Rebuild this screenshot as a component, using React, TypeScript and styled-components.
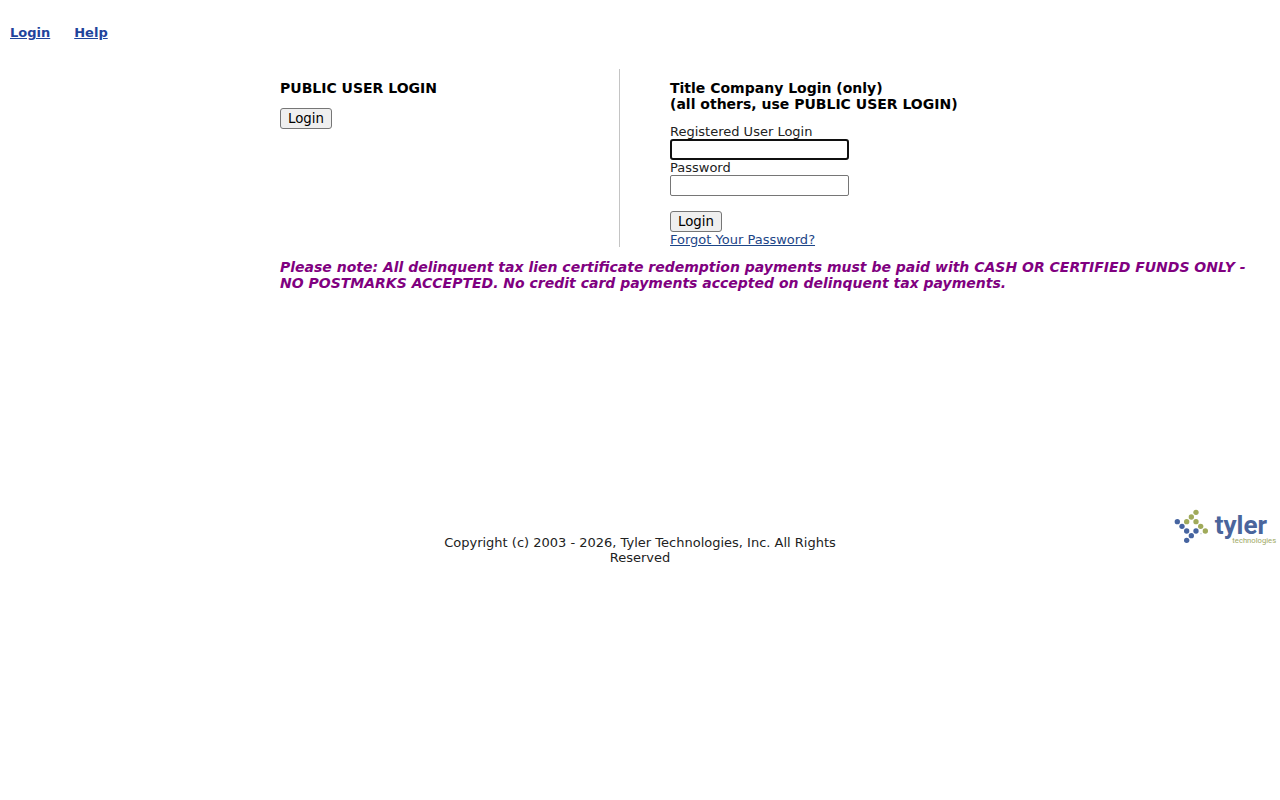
import React from "react";
import styled, { createGlobalStyle } from "styled-components";

const GlobalStyle = createGlobalStyle`
  body {
    margin: 0;
    background: #fff;
    color: #222;
    font: 13px/15px "DejaVu Sans", Verdana, sans-serif;
  }
`;

const Nav = styled.nav`
  display: flex;
  gap: 24px;
  padding: 25px 10px 0;
  height: 44px;
`;

const Link = styled.a<{ $bold?: boolean }>`
  color: ${(p) => (p.$bold ? "#1f449c" : "#1c4587")};
  font-weight: ${(p) => (p.$bold ? "bold" : "normal")};
`;

const Main = styled.main`
  margin-left: 280px;
`;

const Columns = styled.div`
  display: grid;
  grid-template-columns: 34% 66%;
`;

const Column = styled.section<{ $divided?: boolean }>`
  box-sizing: border-box;
  padding: 11px 0 0 ${(p) => (p.$divided ? "50px" : "0")};
  border-right: ${(p) => (p.$divided ? "0" : "1px solid #c4c4c4")};
`;

const Heading = styled.h2`
  margin: 0 0 12px;
  color: #000;
  font-size: 14px;
  line-height: 16px;
`;

const Form = styled.form`
  display: flex;
  flex-direction: column;
  align-items: flex-start;
`;

const Label = styled.label`
  display: block;
  line-height: 15px;
`;

const Field = styled.input`
  box-sizing: border-box;
  width: 179px;
  height: 21px;
  padding: 1px 2px;
  border: 1px solid #767676;
  border-radius: 2px;
  font: inherit;

  &:focus {
    padding: 0 1px;
    border: 2px solid #101010;
    border-radius: 3px;
    outline: none;
  }
`;

const Button = styled.button<{ $spaced?: boolean }>`
  box-sizing: border-box;
  width: 52px;
  height: 21px;
  margin-top: ${(p) => (p.$spaced ? "15px" : "0")};
  padding: 0;
  border: 1px solid #767676;
  border-radius: 3px;
  background: #efefef;
  color: #000;
  font-family: "DejaVu Sans", sans-serif;
`;

const Notice = styled.p`
  margin: 12px 20px 0 0;
  color: purple;
  font-size: 14px;
  font-style: italic;
  font-weight: bold;
  line-height: 16px;
`;

const Footer = styled.footer`
  display: grid;
  grid-template-columns: 1fr 400px 1fr;
  align-items: start;
  margin-top: 218px;
  padding: 0 3px;
`;

const Copyright = styled.p`
  grid-column: 2;
  margin: 26px 0 0;
  text-align: center;
`;

const Logo = styled.svg`
  justify-self: end;
  width: 103px;
  height: 38px;
`;

const greenDots = [[78, 22], [64, 36], [50, 50], [78, 50], [92, 64], [106, 78]];
const blueDots = [[22, 50], [36, 64], [50, 78], [78, 78], [64, 92], [50, 106]];

function TylerLogo() {
  return (
    <Logo viewBox="12 12 309 114" role="img" aria-label="Tyler Technologies">
      {greenDots.map(([x, y]) => (
        <circle key={`${x}-${y}`} cx={x} cy={y} r="8" fill="#a0aa5a" />
      ))}
      {blueDots.map(([x, y]) => (
        <circle key={`${x}-${y}`} cx={x} cy={y} r="8" fill="#4664a0" />
      ))}
      <circle cx="93" cy="86" r="2" fill="#b5bccb" />
      <text x="134" y="86" fill="#4a659c" fontFamily="Roboto, sans-serif" fontWeight="bold" fontSize="78">
        tyler
      </text>
      <text x="187" y="114" fill="#a0a964" fontFamily="Roboto, sans-serif" fontSize="23">
        technologies
      </text>
    </Logo>
  );
}

export default function App() {
  return (
    <>
      <GlobalStyle />
      <Nav>
        <Link href="#login" $bold>Login</Link>
        <Link href="#help" $bold>Help</Link>
      </Nav>
      <Main>
        <Columns>
          <Column>
            <Heading>PUBLIC USER LOGIN</Heading>
            <Button type="button">Login</Button>
          </Column>
          <Column $divided>
            <Heading>
              Title Company Login (only)
              <br />
              (all others, use PUBLIC USER LOGIN)
            </Heading>
            <Form onSubmit={(e) => e.preventDefault()}>
              <Label htmlFor="userId">Registered User Login</Label>
              <Field id="userId" type="text" autoFocus />
              <Label htmlFor="password">Password</Label>
              <Field id="password" type="password" />
              <Button type="submit" $spaced>Login</Button>
              <Link href="#forgot">Forgot Your Password?</Link>
            </Form>
          </Column>
        </Columns>
        <Notice>
          Please note: All delinquent tax lien certificate redemption payments must be paid with
          CASH OR CERTIFIED FUNDS ONLY - NO POSTMARKS ACCEPTED. No credit card payments accepted on
          delinquent tax payments.
        </Notice>
      </Main>
      <Footer>
        <Copyright>Copyright (c) 2003 - 2026, Tyler Technologies, Inc. All Rights Reserved</Copyright>
        <TylerLogo />
      </Footer>
    </>
  );
}
